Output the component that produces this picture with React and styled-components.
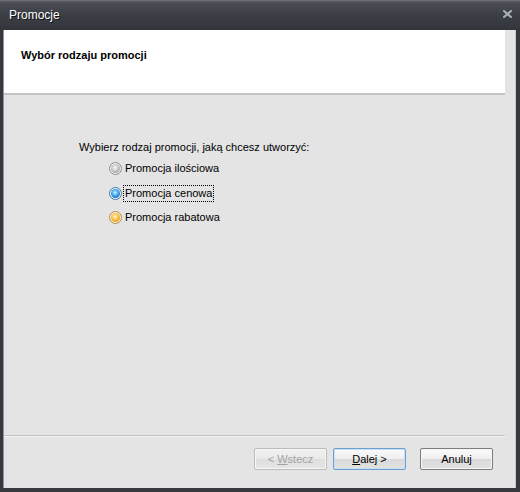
import React, { useState } from "react";
import styled, { createGlobalStyle } from "styled-components";

const GlobalStyle = createGlobalStyle`
  html, body {
    margin: 0;
    padding: 0;
    background: #2c2f34;
  }
  body {
    font-family: "Liberation Sans", Arial, sans-serif;
    font-size: 11px;
  }
`;

const Window = styled.div`
  width: 520px;
  height: 492px;
  display: flex;
  flex-direction: column;
  box-sizing: border-box;
  background: #35383d;
  border-top: 1px solid #6a6d73;
`;

const TitleBar = styled.div`
  height: 29px;
  display: flex;
  align-items: center;
  justify-content: space-between;
  padding: 0 8px 0 9px;
  box-sizing: border-box;
  background: linear-gradient(#595c62 0px, #4a4d53 2px, #3d4046 12px, #32353a 29px);
`;

const Title = styled.span`
  color: #ffffff;
  font-size: 12px;
  text-shadow: 1px 1px 0 #111;
  margin-top: -1px;
`;

const CloseIcon = styled.svg`
  width: 9px;
  height: 8px;
  margin-top: -3px;
`;

const Client = styled.div`
  flex: 1;
  display: flex;
  flex-direction: column;
  margin: 0 4px 4px 3px;
  background: #e4e4e4;
  border-left: 1px solid #8f9296;
  border-right: 1px solid #c8c8c8;
`;

const Header = styled.div`
  height: 65px;
  box-sizing: border-box;
  margin-right: 10px;
  background: #ffffff;
  border-bottom: 2px solid #c4c4c4;
  padding: 17px 0 0 17px;
`;

const HeaderTitle = styled.div`
  font-weight: bold;
  font-size: 11px;
  color: #000;
  padding-top: 2px;
`;

const Body = styled.div`
  flex: 1;
  padding: 46px 0 0 75px;
`;

const Prompt = styled.div`
  color: #000;
  margin-bottom: 7px;
`;

const Options = styled.div`
  display: flex;
  flex-direction: column;
  gap: 7.5px;
  padding-left: 30px;
`;

const Option = styled.label`
  display: flex;
  align-items: center;
  gap: 1px;
  height: 17px;
  cursor: default;
`;

const OptionText = styled.span`
  padding: 1px 1px 2px 1px;
  border: 1px dotted ${(p) => (p.$focused ? "#000" : "transparent")};
  color: #000;
`;

const Separator = styled.div`
  height: 0;
  margin-right: 10px;
  border-top: 1px solid #c2c2c2;
  border-bottom: 1px solid #f4f4f4;
`;

const ButtonRow = styled.div`
  display: flex;
  justify-content: flex-end;
  gap: 6px;
  padding: 11px 22px 18px 0;
`;

const Button = styled.button`
  width: 73px;
  height: 22px;
  font-family: "Liberation Sans", Arial, sans-serif;
  font-size: 11px;
  border-radius: 2px;
  padding: 0 0 1px;
  border: 1px solid ${(p) => (p.$default ? "#6f9fd0" : p.disabled ? "#bcbcbc" : "#7d7d7d")};
  color: ${(p) => (p.disabled ? "#a3a3a3" : "#000")};
  background: ${(p) =>
    p.disabled
      ? "linear-gradient(#f1f1f1, #e9e9e9 50%, #dedede 51%, #e6e6e6)"
      : "linear-gradient(#fbfbfb, #eeeeee 50%, #d9d9d9 51%, #e3e3e3)"};
  box-shadow: ${(p) => (p.$default ? "inset 0 0 0 1px #c7def4" : "inset 0 0 0 1px #f6f6f6")};
  &:nth-child(3) {
    margin-left: 8px;
  }
`;

const Mnemonic = styled.span`
  text-decoration: underline;
`;

const RadioSvg = styled.svg`
  width: 13px;
  height: 13px;
  flex: none;
`;

const palette = {
  gray: ["#fafafa", "#d2d2d2", "#a0a0a0", "#8a8a8a"],
  blue: ["#dff3ff", "#4fb0f0", "#1f6fc0", "#3f78b0"],
  orange: ["#fff8d8", "#ffcc55", "#e89a1c", "#b98a3c"],
};

function Radio({ tone, id }) {
  const [c0, c1, c2, stroke] = palette[tone];
  return (
    <RadioSvg viewBox="0 0 13 13">
      <defs>
        <radialGradient id={id} cx="0.45" cy="0.4" r="0.6">
          <stop offset="0" stopColor={c0} />
          <stop offset="0.5" stopColor={c1} />
          <stop offset="1" stopColor={c2} />
        </radialGradient>
      </defs>
      <circle cx="6.5" cy="6.5" r="6" fill="#f0f0f0" stroke={stroke} strokeWidth="1" />
      <circle cx="6.5" cy="6.5" r="4.5" fill={`url(#${id})`} />
    </RadioSvg>
  );
}

const options = [
  { label: "Promocja ilościowa", tone: "gray" },
  { label: "Promocja cenowa", tone: "blue", focused: true },
  { label: "Promocja rabatowa", tone: "orange" },
];

function App() {
  const [selected, setSelected] = useState(1);

  return (
    <>
      <GlobalStyle />
      <Window>
        <TitleBar>
          <Title>Promocje</Title>
          <CloseIcon viewBox="0 0 9 8">
            <path d="M1 1 L8 7 M8 1 L1 7" stroke="#a9b1bc" strokeWidth="2" strokeLinecap="square" />
          </CloseIcon>
        </TitleBar>
        <Client>
          <Header>
            <HeaderTitle>Wybór rodzaju promocji</HeaderTitle>
          </Header>
          <Body>
            <Prompt>Wybierz rodzaj promocji, jaką chcesz utworzyć:</Prompt>
            <Options>
              {options.map((o, i) => (
                <Option key={o.label} onClick={() => setSelected(i)}>
                  <Radio tone={o.tone} id={`rg${i}`} />
                  <OptionText $focused={o.focused}>{o.label}</OptionText>
                </Option>
              ))}
            </Options>
          </Body>
          <Separator />
          <ButtonRow>
            <Button disabled>
              &lt; <Mnemonic>W</Mnemonic>stecz
            </Button>
            <Button $default>
              <Mnemonic>D</Mnemonic>alej &gt;
            </Button>
            <Button>Anuluj</Button>
          </ButtonRow>
        </Client>
      </Window>
    </>
  );
}

export default App;
